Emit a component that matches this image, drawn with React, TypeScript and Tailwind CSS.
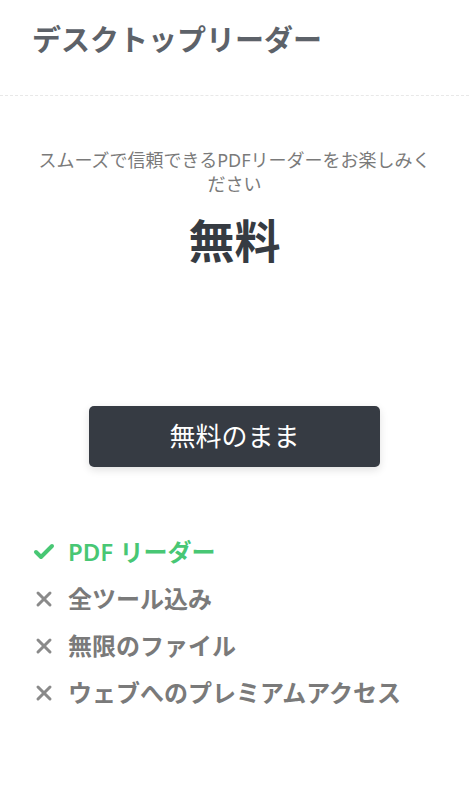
import { Check, X } from "lucide-react"

const FEATURES = [
  { label: "PDF リーダー", included: true },
  { label: "全ツール込み", included: false },
  { label: "無限のファイル", included: false },
  { label: "ウェブへのプレミアムアクセス", included: false },
]

export default function App() {
  return (
    <div
      className="min-h-[800px] w-[469px] bg-white"
      style={{ fontFamily: '"Noto Sans", "Noto Sans CJK JP", sans-serif' }}
    >
      {/* Header */}
      <div className="h-[96px] border-b border-dashed border-[#e8e8e8] px-[32px] pt-[18px]">
        <h2 className="text-[29px] font-bold leading-[44px] text-[#5d6269]">デスクトップリーダー</h2>
      </div>

      {/* Plan */}
      <div className="px-[34px] pt-[52px] text-center">
        <p className="text-[18px] leading-[24px] text-[#7a7a7a]">
          スムーズで信頼できるPDFリーダーをお楽しみください
        </p>
        <p className="mt-[16px] text-[46px] font-bold leading-[56px] text-[#363b42]">無料</p>
      </div>

      <div className="mt-[138px] flex justify-center">
        <button className="h-[61px] w-[291px] rounded-[5px] bg-[#363b43] text-[26px] text-white shadow-[0_3px_8px_rgba(0,0,0,0.12)]">
          無料のまま
        </button>
      </div>

      {/* Features */}
      <ul className="mt-[68px] flex flex-col gap-[13px] px-[32px]">
        {FEATURES.map((f) => (
          <li
            key={f.label}
            className={`flex h-[34px] items-center gap-[12px] text-[24px] font-semibold ${
              f.included ? "text-[#48c774]" : "text-[#7a7a7a]"
            }`}
          >
            {f.included ? (
              <Check className="h-[24px] w-[24px] shrink-0 text-[#48c774]" strokeWidth={4} />
            ) : (
              <X className="h-[24px] w-[24px] shrink-0 text-[#8a8a8a]" strokeWidth={3} />
            )}
            <span>{f.label}</span>
          </li>
        ))}
      </ul>
    </div>
  )
}
